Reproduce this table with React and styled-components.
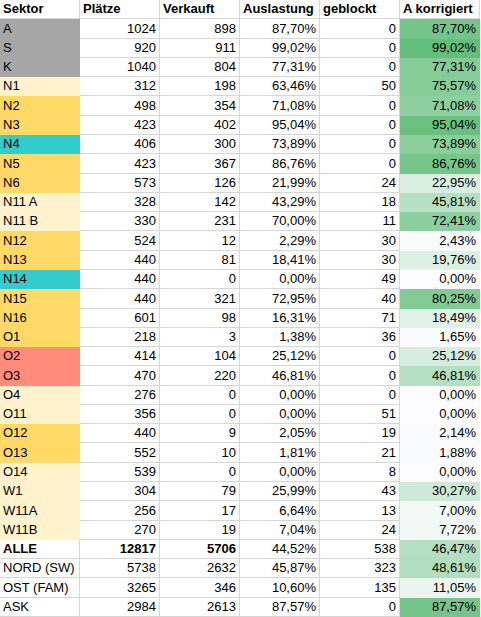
import React from "react";
import styled, { createGlobalStyle } from "styled-components";

const GlobalStyle = createGlobalStyle`
  html, body {
    margin: 0;
    padding: 0;
    background: #ffffff;
  }
  body {
    font-family: "Liberation Sans", Arial, sans-serif;
    color: #000000;
  }
`;

const fills = {
  grey: "#a6a6a6",
  light: "#fff2cc",
  gold: "#ffd966",
  teal: "#33cccc",
  salmon: "#ff8b7c",
};

const rows = [
  ["A", 1024, 898, "87,70%", 0, 87.7, "grey"],
  ["S", 920, 911, "99,02%", 0, 99.02, "grey"],
  ["K", 1040, 804, "77,31%", 0, 77.31, "grey"],
  ["N1", 312, 198, "63,46%", 50, 75.57, "light"],
  ["N2", 498, 354, "71,08%", 0, 71.08, "gold"],
  ["N3", 423, 402, "95,04%", 0, 95.04, "gold"],
  ["N4", 406, 300, "73,89%", 0, 73.89, "teal"],
  ["N5", 423, 367, "86,76%", 0, 86.76, "gold"],
  ["N6", 573, 126, "21,99%", 24, 22.95, "gold"],
  ["N11 A", 328, 142, "43,29%", 18, 45.81, "light"],
  ["N11 B", 330, 231, "70,00%", 11, 72.41, "light"],
  ["N12", 524, 12, "2,29%", 30, 2.43, "gold"],
  ["N13", 440, 81, "18,41%", 30, 19.76, "gold"],
  ["N14", 440, 0, "0,00%", 49, 0, "teal"],
  ["N15", 440, 321, "72,95%", 40, 80.25, "gold"],
  ["N16", 601, 98, "16,31%", 71, 18.49, "gold"],
  ["O1", 218, 3, "1,38%", 36, 1.65, "gold"],
  ["O2", 414, 104, "25,12%", 0, 25.12, "salmon"],
  ["O3", 470, 220, "46,81%", 0, 46.81, "salmon"],
  ["O4", 276, 0, "0,00%", 0, 0, "light"],
  ["O11", 356, 0, "0,00%", 51, 0, "light"],
  ["O12", 440, 9, "2,05%", 19, 2.14, "gold"],
  ["O13", 552, 10, "1,81%", 21, 1.88, "gold"],
  ["O14", 539, 0, "0,00%", 8, 0, "light"],
  ["W1", 304, 79, "25,99%", 43, 30.27, "light"],
  ["W11A", 256, 17, "6,64%", 13, 7.0, "light"],
  ["W11B", 270, 19, "7,04%", 24, 7.72, "light"],
  ["ALLE", 12817, 5706, "44,52%", 538, 46.47, null, true],
  ["NORD (SW)", 5738, 2632, "45,87%", 323, 48.61, null],
  ["OST (FAM)", 3265, 346, "10,60%", 135, 11.05, null],
  ["ASK", 2984, 2613, "87,57%", 0, 87.57, null],
];

const headers = ["Sektor", "Plätze", "Verkauft", "Auslastung", "geblockt", "A korrigiert"];

// excel style white -> green colour scale
const maxPct = Math.max(...rows.map((r) => r[5]));
const scale = (v) => {
  const t = v / maxPct;
  const mix = (a, b) => Math.round(a + (b - a) * t);
  return `rgb(${mix(252, 99)}, ${mix(252, 190)}, ${mix(255, 123)})`;
};

const fmtPct = (v) => v.toFixed(2).replace(".", ",") + "%";

const Sheet = styled.div`
  display: grid;
  grid-template-columns: repeat(6, 80px);
  grid-template-rows: repeat(32, 1fr);
  width: 480px;
  height: 617px;
`;

const Cell = styled.div`
  box-sizing: border-box;
  display: flex;
  align-items: flex-end;
  justify-content: ${(p) => (p.$right ? "flex-end" : "flex-start")};
  padding: 0 3px 2px 3px;
  font-size: 13px;
  line-height: 15px;
  font-weight: ${(p) => (p.$bold ? 700 : 400)};
  white-space: nowrap;
  overflow: hidden;
  background: ${(p) => p.$fill || "#ffffff"};
  border-right: 1px solid ${(p) => (p.$fill ? "transparent" : "#d6d6d6")};
  border-bottom: 1px solid ${(p) => (p.$fill ? "transparent" : "#d6d6d6")};
`;

const HeaderCell = styled(Cell).attrs({ $bold: true })`
  padding-left: 3px;
`;

export default function App() {
  return (
    <>
      <GlobalStyle />
      <Sheet>
        {headers.map((h) => (
          <HeaderCell key={h}>{h}</HeaderCell>
        ))}
        {rows.map(([name, seats, sold, load, blocked, corr, fill, bold]) => (
          <React.Fragment key={name}>
            <Cell $fill={fill ? fills[fill] : null} $bold={bold}>
              {name}
            </Cell>
            <Cell $right $bold={bold}>{seats}</Cell>
            <Cell $right $bold={bold}>{sold}</Cell>
            <Cell $right>{load}</Cell>
            <Cell $right>{blocked}</Cell>
            <Cell $right $fill={scale(corr)}>
              {fmtPct(corr)}
            </Cell>
          </React.Fragment>
        ))}
      </Sheet>
    </>
  );
}
